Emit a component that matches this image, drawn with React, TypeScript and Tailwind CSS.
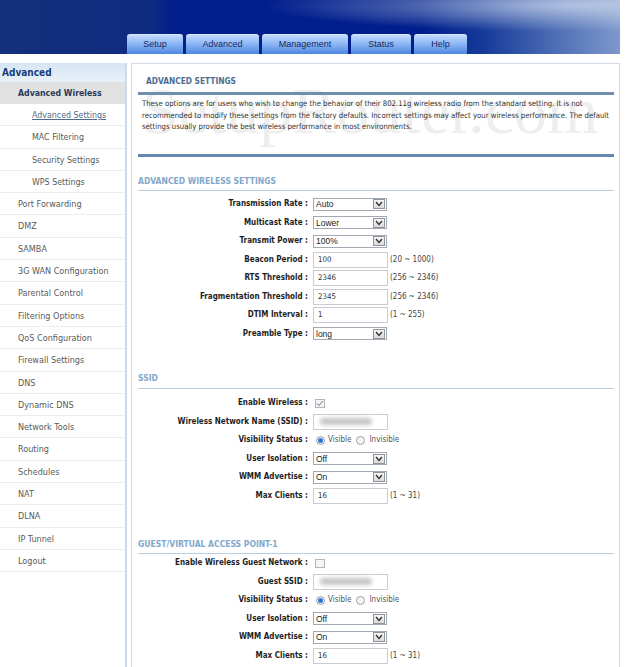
import React from 'react';

const tahoma = "font-['DejaVu_Sans_Condensed','DejaVu_Sans',sans-serif] font-stretch-condensed";
const arial = "font-['Liberation_Sans',Arial,sans-serif]";

const tabs = [
  { label: 'Setup', w: 'w-[56px]' },
  { label: 'Advanced', w: 'w-[73px]' },
  { label: 'Management', w: 'w-[86px]' },
  { label: 'Status', w: 'w-[60px]' },
  { label: 'Help', w: 'w-[53px]' },
];

const subItems = ['Advanced Settings', 'MAC Filtering', 'Security Settings', 'WPS Settings'];
const menuItems = [
  'Port Forwarding', 'DMZ', 'SAMBA', '3G WAN Configuration', 'Parental Control', 'Filtering Options',
  'QoS Configuration', 'Firewall Settings', 'DNS', 'Dynamic DNS', 'Network Tools', 'Routing',
  'Schedules', 'NAT', 'DLNA', 'IP Tunnel', 'Logout',
];

const Select: React.FC<{ value: string }> = ({ value }) => (
  <div className="w-[74px] h-[13px] border border-[#a3a9b1] bg-white flex items-center justify-between pl-[2px] pr-[1px]">
    <span className={`${arial} text-[8.5px] leading-none text-[#222]`}>{value}</span>
    <span className="w-[12px] h-[10px] border border-[#8e959d] bg-[linear-gradient(#f6f6f6,#dadada)] flex items-center justify-center">
      <svg width="8" height="6" viewBox="0 0 8 6">
        <polyline points="1,1 4,4.5 7,1" fill="none" stroke="#333" strokeWidth="1.4" />
      </svg>
    </span>
  </div>
);

const TextBox: React.FC<{ value?: string; blurred?: boolean }> = ({ value, blurred }) => (
  <div className="w-[75px] h-[16px] border border-[#c9cdd2] bg-white flex items-center pl-[4px]">
    {blurred ? (
      <span className="w-[52px] h-[7px] ml-[2px] rounded-full bg-[#c4c4c4] blur-[2px]" />
    ) : (
      <span className="text-[7.8px] leading-none text-[#333]">{value}</span>
    )}
  </div>
);

const Radio: React.FC<{ checked?: boolean }> = ({ checked }) => (
  <span className="w-[9px] h-[9px] rounded-full border border-[#9aa0a8] bg-[#f4f4f4] flex items-center justify-center">
    {checked && <span className="w-[5px] h-[5px] rounded-full bg-[#2f78d8]" />}
  </span>
);

const Check: React.FC<{ checked?: boolean }> = ({ checked }) => (
  <span className="w-[10px] h-[9px] border border-[#b3b6ba] bg-[#f5f5f5] flex items-center justify-center">
    {checked && (
      <svg width="8" height="7" viewBox="0 0 8 7">
        <polyline points="1,3.5 3,5.5 7,1" fill="none" stroke="#a0a4a8" strokeWidth="1.2" />
      </svg>
    )}
  </span>
);

const Row: React.FC<{ label: string; children: React.ReactNode; hint?: string }> = ({ label, children, hint }) => (
  <div className="h-[18.5px] flex items-center">
    <span className="w-[172px] pr-[2px] text-right font-bold text-[8px] text-[#1e1e1e] whitespace-nowrap">{label} :</span>
    <span className="ml-[3px] flex items-center">{children}</span>
    {hint && <span className="ml-[2px] text-[8px] text-[#444]">{hint}</span>}
  </div>
);

const Visibility = () => (
  <span className="flex items-center text-[8px] text-[#555]">
    <span className="ml-[3px]"><Radio checked /></span>
    <span className="ml-[3px]">Visible</span>
    <span className="ml-[4px]"><Radio /></span>
    <span className="ml-[5px]">Invisible</span>
  </span>
);

const SectionTitle: React.FC<{ title: string; className: string }> = ({ title, className }) => (
  <div className={className}>
    <div className="h-[12px] leading-[12px] font-bold text-[8.5px] text-[#82a8cc]">{title}</div>
  </div>
);

export default function App() {
  return (
    <div className={`w-[628px] h-[667px] overflow-hidden bg-white ${tahoma}`}>
      <header className="w-[620px] h-[54px] flex items-end pl-[127px] gap-[3px] bg-[radial-gradient(ellipse_at_92%_10%,rgba(215,225,240,0.7),transparent_38%),linear-gradient(90deg,#13307c_0%,#0e2b80_24%,#02208e_28%,#001e8c_68%,#163a9a_78%,#4f6fb6_90%,#7f98cc_100%)]">
        {tabs.map((t) => (
          <div
            key={t.label}
            className={`${t.w} h-[20px] rounded-t-[3px] border-t border-[#d8e8ff] bg-[linear-gradient(180deg,#c2daff_0%,#8fb8f4_45%,#4f86e2_100%)] flex items-center justify-center ${arial} text-[9px] text-[#18295e]`}
          >
            {t.label}
          </div>
        ))}
      </header>

      <div className="flex mt-[9px] w-[620px]">
        <aside className="w-[127px] h-[610px] border-r-2 border-[#cddbe9] shrink-0">
          <div className="h-[19px] leading-[19px] pl-[2px] bg-[linear-gradient(180deg,#d7e5f4,#e9f0f8)] font-bold text-[10px] text-[#173c7c]">
            Advanced
          </div>
          <div className="h-[22px] leading-[22px] pl-[18px] bg-[#e1e1e1] font-bold text-[8.7px] text-[#2b3957]">
            Advanced Wireless
          </div>
          {subItems.map((s, i) => (
            <div
              key={s}
              className={`h-[22.3px] leading-[22.3px] pl-[32px] border-b border-[#eeeeee] text-[8.8px] ${i === 0 ? 'text-[#4f6b8c] underline' : 'text-[#5a5a5a]'}`}
            >
              {s}
            </div>
          ))}
          {menuItems.map((m) => (
            <div key={m} className="h-[22.3px] leading-[22.3px] pl-[18px] border-b border-[#eeeeee] text-[9px] text-[#5a5a5a]">
              {m}
            </div>
          ))}
        </aside>

        <main className="relative ml-[4px] flex-1 h-[610px] border border-[#cfdbe7] pt-[11px] pl-[6px] pr-[5px]">
          <div className="absolute left-[10px] top-[14px] font-['Liberation_Serif',serif] text-[66px] leading-none text-[#eeeeee] select-none pointer-events-none">
            SetupRouter.com
          </div>
          <div className="relative">
            <div className="h-[12px] leading-[12px] pl-[8px] font-bold text-[8.3px] text-[#4d6d93]">ADVANCED SETTINGS</div>
            <div className="mt-[5px] h-[3px] bg-[#6f8fb0]" />
            <p className="mt-[3px] pl-[4px] pr-[2px] text-[7.7px] leading-[11.5px] text-[#333]">
              These options are for users who wish to change the behavior of their 802.11g wireless radio from the standard setting. It is not
              recommended to modify these settings from the factory defaults. Incorrect settings may affect your wireless performance. The
              default settings usually provide the best wireless performance in most environments.
            </p>
            <div className="mt-[21.5px] h-[3px] bg-[#6389b2]" />

            <SectionTitle title="ADVANCED WIRELESS SETTINGS" className="mt-[18px]" />
            <div className="mt-[3px] h-px bg-[#b5cde2]" />
            <div className="mt-[4px]">
              <Row label="Transmission Rate"><Select value="Auto" /></Row>
              <Row label="Multicast Rate"><Select value="Lower" /></Row>
              <Row label="Transmit Power"><Select value="100%" /></Row>
              <Row label="Beacon Period" hint="(20 ~ 1000)"><TextBox value="100" /></Row>
              <Row label="RTS Threshold" hint="(256 ~ 2346)"><TextBox value="2346" /></Row>
              <Row label="Fragmentation Threshold" hint="(256 ~ 2346)"><TextBox value="2345" /></Row>
              <Row label="DTIM Interval" hint="(1 ~ 255)"><TextBox value="1" /></Row>
              <Row label="Preamble Type"><Select value="long" /></Row>
            </div>

            <SectionTitle title="SSID" className="mt-[29px]" />
            <div className="mt-[4px] h-px bg-[#b5cde2]" />
            <div className="mt-[5px]">
              <Row label="Enable Wireless"><span className="ml-[2px]"><Check checked /></span></Row>
              <Row label="Wireless Network Name (SSID)"><TextBox blurred /></Row>
              <Row label="Visibility Status"><Visibility /></Row>
              <Row label="User Isolation"><Select value="Off" /></Row>
              <Row label="WMM Advertise"><Select value="On" /></Row>
              <Row label="Max Clients" hint="(1 ~ 31)"><TextBox value="16" /></Row>
            </div>

            <SectionTitle title="GUEST/VIRTUAL ACCESS POINT-1" className="mt-[33px]" />
            <div className="mt-[3px] h-px bg-[#b5cde2]" />
            <div>
              <Row label="Enable Wireless Guest Network"><span className="ml-[2px]"><Check /></span></Row>
              <Row label="Guest SSID"><TextBox blurred /></Row>
              <Row label="Visibility Status"><Visibility /></Row>
              <Row label="User Isolation"><Select value="Off" /></Row>
              <Row label="WMM Advertise"><Select value="On" /></Row>
              <Row label="Max Clients" hint="(1 ~ 31)"><TextBox value="16" /></Row>
            </div>
          </div>
        </main>
      </div>
    </div>
  );
}
